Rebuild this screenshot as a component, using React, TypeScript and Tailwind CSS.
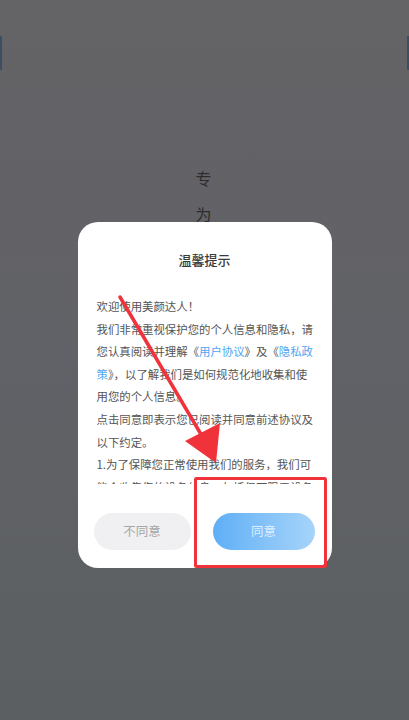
import React from "react";

const bodyLines: React.ReactNode[] = [
  "欢迎使用美颜达人！",
  "我们非常重视保护您的个人信息和隐私，请",
  <>
    您认真阅读并理解《<span className="text-[#4ea6f2]">用户协议</span>》及《
    <span className="text-[#4ea6f2]">隐私政</span>
  </>,
  <>
    <span className="text-[#4ea6f2]">策</span>》，以了解我们是如何规范化地收集和使
  </>,
  "用您的个人信息。",
  "点击同意即表示您已阅读并同意前述协议及",
  "以下约定。",
  "1.为了保障您正常使用我们的服务，我们可",
  "能会收集您的设备信息，包括但不限于设备",
];

function Annotation() {
  // red arrow + box drawn over the screenshot
  return (
    <svg className="pointer-events-none absolute inset-0" width="409" height="720" viewBox="0 0 409 720">
      <line x1="120" y1="297" x2="202" y2="436" stroke="#f0333b" strokeWidth="3.5" strokeLinecap="round" />
      <polygon points="216,463 185,441 220,423" fill="#f0333b" />
      <rect x="195.5" y="478.5" width="130" height="88" fill="none" stroke="#f0333b" strokeWidth="3" rx="1" />
    </svg>
  );
}

export default function App() {
  return (
    <div className="relative h-[720px] w-full overflow-hidden bg-linear-to-b from-[#646366] via-[#616267] to-[#5b5f61] font-['Noto_Sans_CJK_SC','Noto_Sans',sans-serif]">
      {/* page behind the overlay */}
      <div className="flex flex-col items-center pt-[160px] pr-[2px] text-[16px] leading-[36px] text-[#2c2c2e]">
        <span>专</span>
        <span>为</span>
      </div>
      <div className="absolute left-0 top-[36px] h-[34px] w-[2px] bg-[#3b4e62]" />
      <div className="absolute right-0 top-[36px] h-[34px] w-[2px] bg-[#3b4e62]" />

      {/* dialog */}
      <div className="absolute inset-0 flex flex-col items-center pt-[222px]">
        <div className="w-[254px] rounded-[20px] bg-white">
          <div className="pt-[28px] text-center text-[13px] font-medium leading-[20px] text-[#3a3a3a]">温馨提示</div>
          <div className="mt-[25px] h-[189px] overflow-hidden pl-[19px] pr-[16px] text-[11.4px] leading-[22.6px] text-[#555555]">
            {bodyLines.map((line, i) => (
              <div key={i} className="whitespace-nowrap">
                {line}
              </div>
            ))}
          </div>
          <div className="mt-[29px] flex justify-between pb-[18px] pl-[16px] pr-[17px]">
            <button className="flex h-[37px] w-[97px] items-center justify-center rounded-full bg-[#f0f0f2] text-[12.5px] text-[#a6a6a6]">
              不同意
            </button>
            <button className="flex h-[37px] w-[102px] items-center justify-center rounded-full bg-linear-to-r from-[#5eaff6] to-[#a6d4f9] text-[12.5px] text-[#dcefff]">
              同意
            </button>
          </div>
        </div>
      </div>

      <Annotation />
    </div>
  );
}
